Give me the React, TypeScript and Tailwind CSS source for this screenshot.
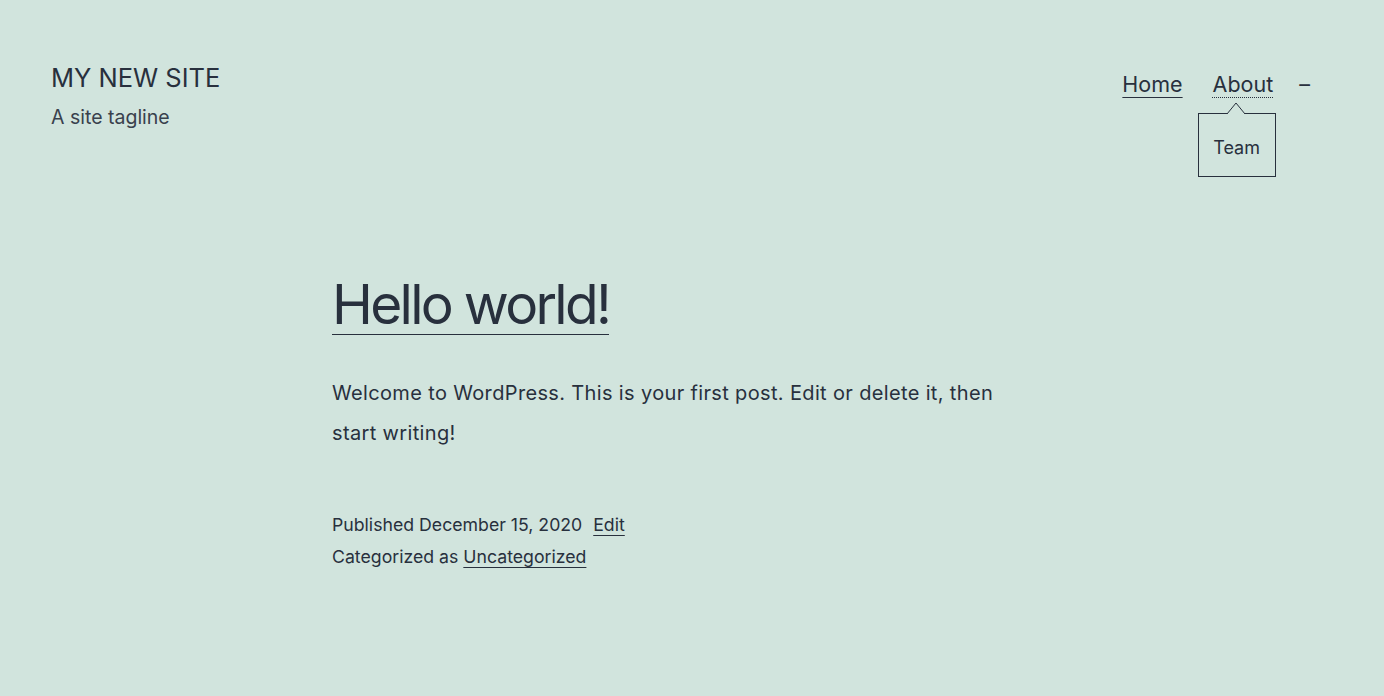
export default function App() {
  const font = { fontFamily: "Inter, 'Noto Sans', sans-serif" };
  return (
    <div className="w-[1384px] h-[696px] bg-[#d1e4dd] text-[#28303d] overflow-hidden" style={font}>
      <header className="flex justify-between pl-[51px] pr-[74px] pt-[62px]">
        <div className="flex flex-col">
          <div className="text-[25.5px] leading-[32px]">MY NEW SITE</div>
          <div className="text-[19.5px] leading-[26px] mt-[10px] text-[#39414d]">A site tagline</div>
        </div>
        <nav className="flex items-start pt-[8px] text-[21.5px] leading-[28px]">
          <a className="underline underline-offset-[5px] decoration-1">Home</a>
          <div className="relative ml-[30px]">
            <a className="underline decoration-dotted underline-offset-[5px] decoration-1">About</a>
            <div className="absolute left-[-15px] top-[43px] w-[78px] h-[64px] border border-[#28303d] flex items-center justify-center pt-[6px] text-[18px]">
              Team
              <svg className="absolute left-[28px] top-[-12px]" width="18" height="13" viewBox="0 0 18 13">
                <path d="M0 12 L9 1 L18 12" fill="#d1e4dd" stroke="#28303d" strokeWidth="1" />
              </svg>
            </div>
          </div>
          <span className="ml-[26px]">–</span>
        </nav>
      </header>
      <main className="pl-[332px] pt-[144px]">
        <h1 className="text-[55px] leading-[60px] tracking-[-2.7px] inline-block border-b border-[#28303d]">Hello world!</h1>
        <p className="mt-[38px] text-[20px] leading-[40px] tracking-[0.35px] w-[700px]">
          Welcome to WordPress. This is your first post. Edit or delete it, then start writing!
        </p>
        <div className="mt-[56px] text-[17.7px] leading-[32px]">
          <div>
            Published December 15, 2020 <a className="ml-[6px] underline underline-offset-[4px] decoration-1">Edit</a>
          </div>
          <div>
            Categorized as <a className="underline underline-offset-[4px] decoration-1">Uncategorized</a>
          </div>
        </div>
      </main>
    </div>
  );
}
